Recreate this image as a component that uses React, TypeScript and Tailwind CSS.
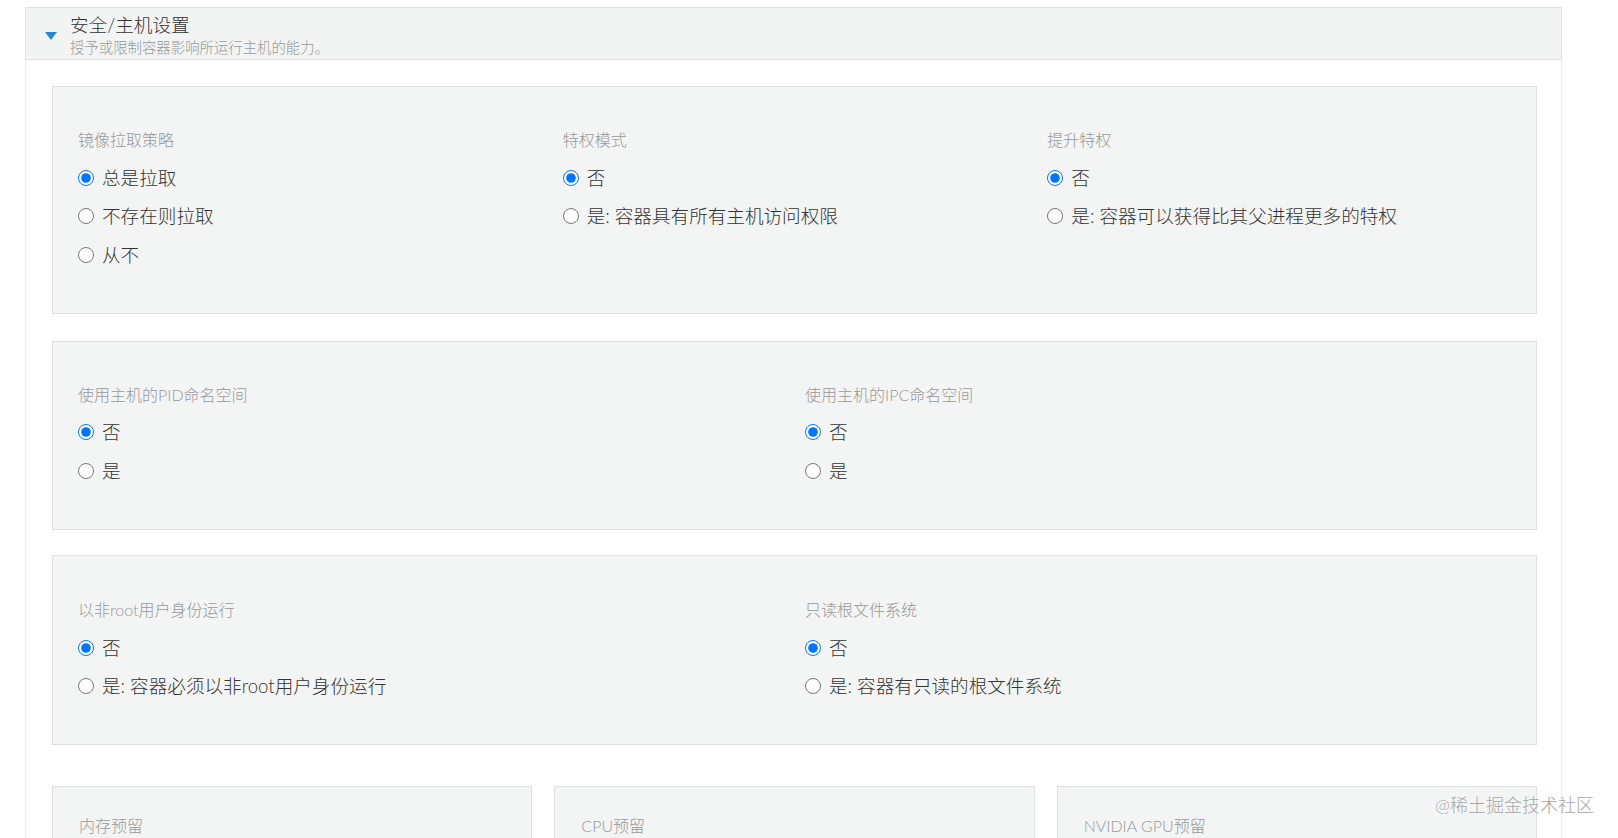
import React from "react";

type Opt = { label: string; checked?: boolean };

function Radio({ name, opt }: { name: string; opt: Opt }) {
  return (
    <label className="flex h-[38.5px] items-center gap-2 text-[18.6px] leading-[24px] text-[#333]">
      <input
        type="radio"
        name={name}
        defaultChecked={opt.checked}
        className="m-0 h-4 w-4 shrink-0 accent-[#0075ff]"
      />
      <span>{opt.label}</span>
    </label>
  );
}

function Field({ title, name, options }: { title: string; name: string; options: Opt[] }) {
  return (
    <div className="flex flex-col">
      <div className="mb-[7.5px] text-[16px] leading-[22px] text-[#999]">{title}</div>
      {options.map((o) => (
        <Radio key={o.label} name={name} opt={o} />
      ))}
    </div>
  );
}

const NO_YES = (yes: string): Opt[] => [{ label: "否", checked: true }, { label: yes }];

function App() {
  return (
    <div className="relative min-h-screen bg-white pt-[7px] font-['Lato','Noto_Sans_CJK_SC',sans-serif] font-light">
      <div className="ml-[25px] mr-[56px]">
        {/* header */}
        <div className="flex items-center border border-[#dfe2e2] bg-[#f2f4f4] pl-[19px] pt-[6px] pb-[2px]">
          <svg width="12" height="8" viewBox="0 0 12 8" className="mt-[1px] shrink-0">
            <path d="M0 0 L12 0 L6 8 Z" fill="#2b87d1" />
          </svg>
          <div className="ml-[13px] flex flex-col">
            <div className="text-[18.6px] leading-[22px] text-[#333]">安全/主机设置</div>
            <div className="mt-[3px] text-[14.4px] leading-[18px] text-[#999]">
              授予或限制容器影响所运行主机的能力。
            </div>
          </div>
        </div>

        {/* body */}
        <div className="flex flex-col border-x border-[#eeeeee] pl-[26px] pr-[24px] pb-10 pt-[26px]">
          <div className="grid grid-cols-3 gap-x-[22px] border border-[#dddfe0] bg-[#f3f4f4] pl-[25px] pr-[26px] pt-[42px] pb-[38.5px]">
            <Field
              title="镜像拉取策略"
              name="pull"
              options={[{ label: "总是拉取", checked: true }, { label: "不存在则拉取" }, { label: "从不" }]}
            />
            <Field title="特权模式" name="priv" options={NO_YES("是: 容器具有所有主机访问权限")} />
            <Field title="提升特权" name="escalate" options={NO_YES("是: 容器可以获得比其父进程更多的特权")} />
          </div>

          <div className="mt-[27px] grid grid-cols-2 gap-x-[22px] border border-[#dddfe0] bg-[#f3f4f4] pl-[25px] pr-[26px] pt-[42px] pb-[38.5px]">
            <Field title="使用主机的PID命名空间" name="pid" options={NO_YES("是")} />
            <Field title="使用主机的IPC命名空间" name="ipc" options={NO_YES("是")} />
          </div>

          <div className="mt-[25.5px] grid grid-cols-2 gap-x-[22px] border border-[#dddfe0] bg-[#f3f4f4] pl-[25px] pr-[26px] pt-[43px] pb-[38.5px]">
            <Field title="以非root用户身份运行" name="nonroot" options={NO_YES("是: 容器必须以非root用户身份运行")} />
            <Field title="只读根文件系统" name="rofs" options={NO_YES("是: 容器有只读的根文件系统")} />
          </div>

          <div className="mt-[41px] grid grid-cols-3 gap-x-[22px]">
            {["内存预留", "CPU预留", "NVIDIA GPU预留"].map((t) => (
              <div key={t} className="h-[120px] border border-[#dddfe0] bg-[#f3f4f4] px-[26px] pt-[27.5px]">
                <div className="text-[16px] leading-[22px] text-[#999]">{t}</div>
              </div>
            ))}
          </div>
        </div>
      </div>

      {/* watermark */}
      <div className="absolute left-[1435px] top-[793px] text-[18px] leading-[24px] text-[#a5a5a5] [text-shadow:0_0_2px_#fff]">
        @稀土掘金技术社区
      </div>
    </div>
  );
}

export default App;
